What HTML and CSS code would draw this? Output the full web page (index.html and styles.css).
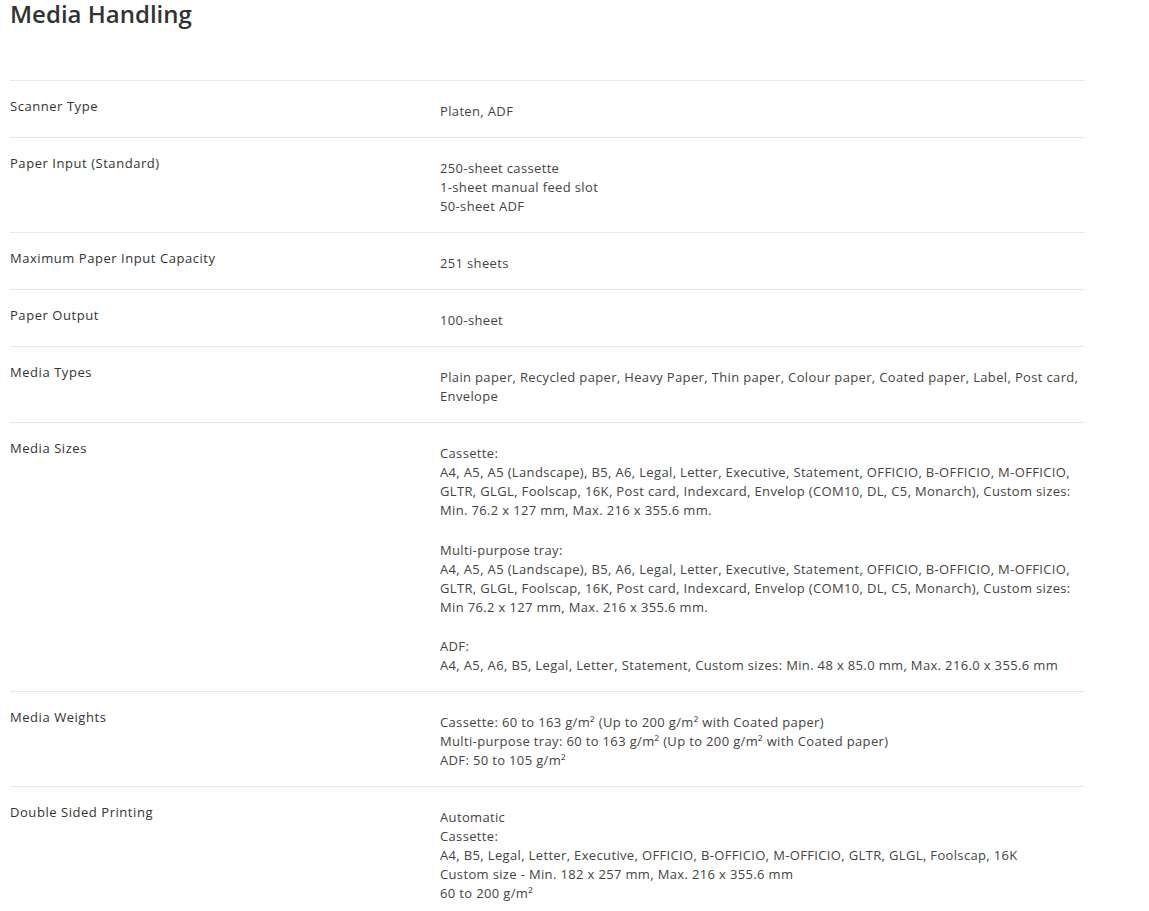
FILE: index.html
```html
<!DOCTYPE html>
<html lang="en">
<head>
	<meta charset="utf-8" />
	<meta name="viewport" content="width=device-width, initial-scale=1.0">
	<title>Media Handling</title>
	<link rel="stylesheet" href="styles.css">
</head>
<body>
	<div class="spec-section">
		<h2 class="spec-title">Media Handling</h2>

		<div class="spec-table">
			<div class="spec-row">
				<div class="spec-label">Scanner Type</div>
				<div class="spec-value"><p>Platen, ADF</p></div>
			</div>

			<div class="spec-row">
				<div class="spec-label">Paper Input (Standard)</div>
				<div class="spec-value"><p>250-sheet cassette<br>1-sheet manual feed slot<br>50-sheet ADF</p></div>
			</div>

			<div class="spec-row">
				<div class="spec-label">Maximum Paper Input Capacity</div>
				<div class="spec-value"><p>251 sheets</p></div>
			</div>

			<div class="spec-row">
				<div class="spec-label">Paper Output</div>
				<div class="spec-value"><p>100-sheet</p></div>
			</div>

			<div class="spec-row">
				<div class="spec-label">Media Types</div>
				<div class="spec-value"><p>Plain paper, Recycled paper, Heavy Paper, Thin paper, Colour paper, Coated paper, Label, Post card, Envelope</p></div>
			</div>

			<div class="spec-row">
				<div class="spec-label">Media Sizes</div>
				<div class="spec-value">
					<p>Cassette:<br>A4, A5, A5 (Landscape), B5, A6, Legal, Letter, Executive, Statement, OFFICIO, B-OFFICIO, M-OFFICIO, GLTR, GLGL, Foolscap, 16K, Post card, Indexcard, Envelop (COM10, DL, C5, Monarch), Custom sizes: Min. 76.2 x 127 mm, Max. 216 x 355.6 mm.</p>
					<p>Multi-purpose tray:<br>A4, A5, A5 (Landscape), B5, A6, Legal, Letter, Executive, Statement, OFFICIO, B-OFFICIO, M-OFFICIO, GLTR, GLGL, Foolscap, 16K, Post card, Indexcard, Envelop (COM10, DL, C5, Monarch), Custom sizes: Min 76.2 x 127 mm, Max. 216 x 355.6 mm.</p>
					<p>ADF:<br>A4, A5, A6, B5, Legal, Letter, Statement, Custom sizes: Min. 48 x 85.0 mm, Max. 216.0 x 355.6 mm</p>
				</div>
			</div>

			<div class="spec-row">
				<div class="spec-label">Media Weights</div>
				<div class="spec-value"><p>Cassette: 60 to 163 g/m² (Up to 200 g/m² with Coated paper)<br>Multi-purpose tray: 60 to 163 g/m² (Up to 200 g/m² with Coated paper)<br>ADF: 50 to 105 g/m²</p></div>
			</div>

			<div class="spec-row">
				<div class="spec-label">Double Sided Printing</div>
				<div class="spec-value"><p>Automatic<br>Cassette:<br>A4, B5, Legal, Letter, Executive, OFFICIO, B-OFFICIO, M-OFFICIO, GLTR, GLGL, Foolscap, 16K<br>Custom size - Min. 182 x 257 mm, Max. 216 x 355.6 mm<br>60 to 200 g/m²</p></div>
			</div>
		</div>
	</div>
</body>
</html>
```

FILE: styles.css
```css
/* global */
html {min-height:100%;}
body {
	margin: 0;
	color: #333;
	font-family: "Open Sans", "Noto Sans", "Liberation Sans", sans-serif;
	background: #fff;
}
*,
:after,
:before {
	box-sizing: border-box;
}
/* global end */

/* spec table */
.spec-section {width:1085px;padding:0 0 0 10px;}

.spec-title {
	margin: 0;
	height: 80px;
	font-size: 24px;
	line-height: 28px;
	font-weight: 600;
	color: #333;
}

.spec-table {border-top:1px solid #e9e9e9;}
.spec-row {display:flex;border-bottom:1px solid #e9e9e9;padding:16px 0;}
.spec-label {width:430px;flex:none;font-size:13px;line-height:19px;letter-spacing:.55px;color:#333;}
.spec-value {flex:1;margin-top:5px;font-size:13px;line-height:19px;letter-spacing:.35px;color:#444;}
.spec-value p {margin:0 0 20.5px;}
.spec-value p:last-child {margin-bottom:0;}
/* spec table end */
```
